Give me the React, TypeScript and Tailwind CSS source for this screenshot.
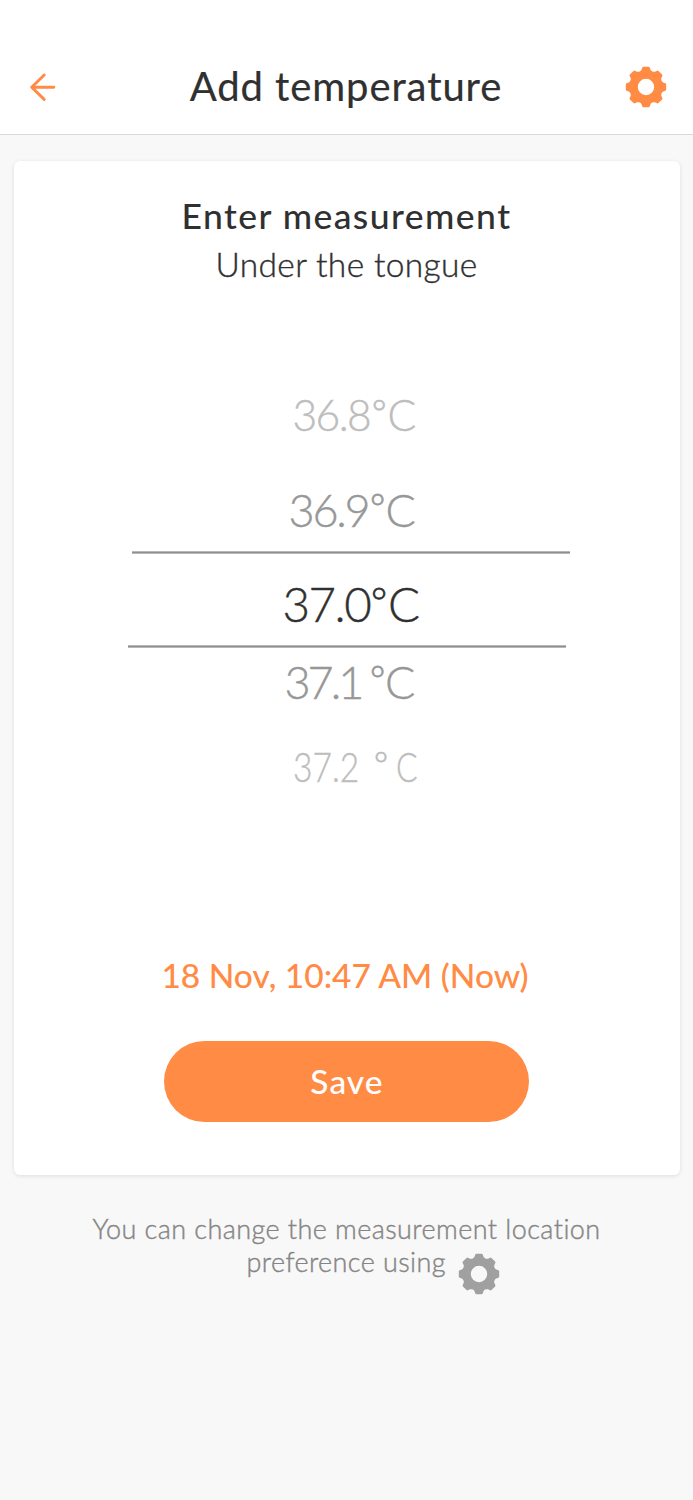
const TEETH = [0, 45, 90, 135, 180, 225, 270, 315];

function Gear({ className }: { className: string }) {
  return (
    <svg viewBox="-21 -21 42 42" className={className} fill="none" aria-hidden="true">
      <circle r="12.2" stroke="currentColor" strokeWidth="8" />
      {TEETH.map((angle) => (
        <path
          key={angle}
          transform={`rotate(${angle})`}
          d="M-2.6 -20.2H2.6Q3.4 -20.1 3.7 -19.4L4.5 -17.2Q5 -16 6.4 -15.6L5 -10H-5L-6.4 -15.6Q-5 -16 -4.5 -17.2L-3.7 -19.4Q-3.4 -20.1 -2.6 -20.2Z"
          fill="currentColor"
        />
      ))}
    </svg>
  );
}

function BackArrow() {
  return (
    <svg
      viewBox="0 0 30 30"
      className="h-[30px] w-[30px] text-[#ff8b45]"
      fill="none"
      stroke="currentColor"
      strokeWidth="2.9"
      strokeLinecap="round"
      strokeLinejoin="round"
      aria-hidden="true"
    >
      <path d="M16.2 3L3.7 15.2L16.2 27.4M3.7 15.2H25.8" />
    </svg>
  );
}

const light = "font-light [-webkit-text-stroke:0.4px_currentColor]";

type ReadingProps = {
  value: string;
  row: string;
  digits: string;
  degree: string;
  unit: string;
};

function Reading({ value, row, digits, degree, unit }: ReadingProps) {
  return (
    <div className={`flex self-start leading-[60px] ${row}`}>
      <span className={`whitespace-pre ${digits}`}>{value}</span>
      <span className={degree}>
        <span className="inline-block origin-[0_14px] scale-[0.82] [-webkit-text-stroke:0.9px_currentColor]">°</span>
      </span>
      <span className={unit}>C</span>
    </div>
  );
}

export default function App() {
  return (
    <div className="flex min-h-[1500px] w-full flex-col overflow-hidden whitespace-nowrap bg-[#f8f8f8] font-['Lato',sans-serif] text-[#303030] [font-variant-ligatures:none]">
      <header className="flex h-[135px] items-center justify-between border-b border-[#dadada] bg-white pt-10 pr-[26px] pl-7">
        <button aria-label="Back">
          <BackArrow />
        </button>
        <h1 className="mb-[3px] ml-[9px] text-[40px] leading-[48px] font-normal tracking-[0.92px] [-webkit-text-stroke:0.2px_currentColor]">
          Add temperature
        </h1>
        <button aria-label="Settings">
          <Gear className="h-[42px] w-[42px] text-[#ff8b45]" />
        </button>
      </header>

      <main className="mt-[26px] mr-[13px] ml-[14px] flex h-[1014px] flex-col items-center rounded-[6px] bg-white pt-[31px] pr-px shadow-[0_1px_4px_rgba(0,0,0,0.11)]">
        <h2 className="text-[35.5px] leading-[48px] font-medium tracking-[1.45px]">Enter measurement</h2>
        <p className={`text-[33.5px] leading-[48px] tracking-[0.35px] ${light}`}>Under the tongue</p>

        <div className={`mt-[97px] flex w-full flex-col items-center ${light}`}>
          <Reading
            value="36.8"
            row="pl-[278.5px] text-[42.6px] text-[#bdbdbd]"
            digits="w-[79.5px] tracking-[-1.6px]"
            degree="w-[15.5px]"
            unit=""
          />
          <Reading
            value="36.9"
            row="mt-[35px] pl-[274.5px] text-[45px] text-[#979797]"
            digits="w-[81.5px] tracking-[-2.2px]"
            degree="w-[15.5px]"
            unit=""
          />
          <div className="mt-[11px] ml-[9px] h-[3px] w-[438px] border-y border-[#b8b8b8] bg-[#8f8f8f]" />
          <Reading
            value="37.0"
            row="mt-[20px] pl-[268.5px] text-[47.5px]"
            digits="w-[88.5px] tracking-[-1.5px]"
            degree="w-[17px]"
            unit=""
          />
          <div className="mt-[11px] h-[3px] w-[438px] border-y border-[#b8b8b8] bg-[#8f8f8f]" />
          <Reading
            value="37.1 "
            row="mt-[4px] pl-[270.5px] text-[45px] text-[#979797]"
            digits="w-[85px] tracking-[-3px]"
            degree="w-[15.5px]"
            unit=""
          />
          <Reading
            value="37.2 "
            row="mt-[24px] pl-[278.5px] text-[41.5px] text-[#bdbdbd]"
            digits="w-[81px] origin-left scale-x-[0.81]"
            degree="w-[22px]"
            unit="w-[22px] origin-left scale-x-[0.77]"
          />
        </div>

        <div className="mt-[155px] mr-[3px] text-[33.5px] leading-[48px] font-medium text-[#ff8b45]">
          18 Nov, 10:47 AM (Now)
        </div>
        <button className="mt-[42px] h-[80.5px] w-[364.5px] rounded-full bg-[#ff8b45] pl-px text-[33.5px] leading-[48px] font-medium tracking-[1.1px] text-white">
          Save
        </button>
      </main>

      <footer className="mt-[38px] flex flex-col items-center text-[27px] leading-[32.5px] text-[#858585]">
        <p className={`tracking-[0.43px] ${light}`}>You can change the measurement location</p>
        <div className="flex pl-[53px]">
          <span className={`w-[211px] tracking-[0.4px] ${light}`}>preference using</span>
          <Gear className="mt-[7.5px] h-[42px] w-[42px] text-[#a0a0a0]" />
        </div>
      </footer>
    </div>
  );
}
